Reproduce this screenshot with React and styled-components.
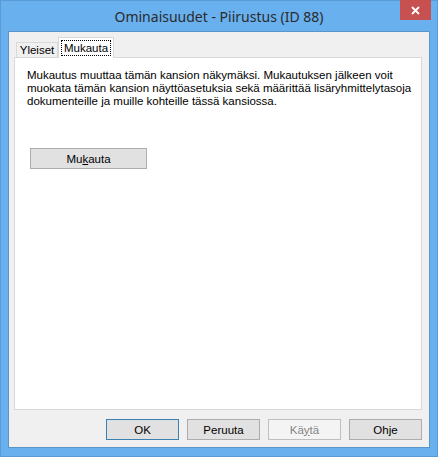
import styled, { createGlobalStyle } from "styled-components";

const Global = createGlobalStyle`
  html, body {
    margin: 0;
    padding: 0;
    background: #ffffff;
  }
  body {
    font-family: "Liberation Sans", Arial, sans-serif;
    font-size: 11.5px;
    color: #000;
  }
`;

const Window = styled.div`
  width: 438px;
  height: 457px;
  background: #68b0ee;
  display: flex;
  flex-direction: column;
  box-sizing: border-box;
  border: 1px solid #5b9bd5;
`;

const TitleBar = styled.div`
  height: 30px;
  position: relative;
  display: flex;
  align-items: center;
  justify-content: center;
`;

const Title = styled.div`
  font-family: "Noto Sans", sans-serif;
  font-size: 14px;
  color: #2b2b2b;
  padding-top: 1px;
`;

const CloseButton = styled.div`
  position: absolute;
  top: -1px;
  right: 6px;
  width: 31px;
  height: 20px;
  background: #c75050;
  color: #fff;
  display: flex;
  align-items: center;
  justify-content: center;
`;

const Client = styled.div`
  flex: 1;
  margin: 0 7px 8px 7px;
  background: #f0f0f0;
  border: 1px solid #5a94c8;
  display: flex;
  flex-direction: column;
  padding: 6px 7px 0 5px;
`;

const TabRow = styled.div`
  display: flex;
  align-items: flex-end;
  height: 20px;
  padding-left: 2px;
  position: relative;
  z-index: 1;
`;

const Tab = styled.div`
  box-sizing: border-box;
  width: ${(p) => p.$width}px;
  height: ${(p) => (p.$active ? "21px" : "16px")};
  padding-top: ${(p) => (p.$active ? "2px" : "0")};
  background: ${(p) => (p.$active ? "#ffffff" : "#f0f0f0")};
  border: 1px solid #d9d9d9;
  border-bottom: ${(p) => (p.$active ? "none" : "1px solid #d9d9d9")};
  display: flex;
  justify-content: center;
  align-items: ${(p) => (p.$active ? "flex-start" : "center")};
  line-height: 13px;
`;

const FocusLabel = styled.span`
  border: 1px dotted #000;
  padding: 0 2px;
  line-height: 14px;
`;

const Panel = styled.div`
  height: 353px;
  box-sizing: border-box;
  margin-top: -1px;
  background: #ffffff;
  border: 1px solid #d9d9d9;
  padding: 11px 10px 0 12px;
  display: flex;
  flex-direction: column;
  align-items: flex-start;
`;

const Description = styled.p`
  margin: 0;
  line-height: 13px;
  white-space: nowrap;
`;

const Button = styled.button`
  box-sizing: border-box;
  width: ${(p) => p.$width || 73}px;
  height: 21px;
  font-family: "Liberation Sans", Arial, sans-serif;
  font-size: 11.5px;
  line-height: 14px;
  padding: 0;
  background: ${(p) => (p.disabled ? "#f4f4f4" : "#e1e1e1")};
  color: ${(p) => (p.disabled ? "#838383" : "#000")};
  border: 1px solid
    ${(p) => (p.$default ? "#3c7fb1" : p.disabled ? "#bfbfbf" : "#adadad")};
`;

const CustomizeButton = styled(Button)`
  margin: 40px 0 0 3px;
`;

const Footer = styled.div`
  display: flex;
  justify-content: flex-end;
  gap: 8px;
  padding-top: 9px;
`;

const Key = styled.u`
  text-underline-offset: 1px;
`;

export default function App() {
  return (
    <>
      <Global />
      <Window>
        <TitleBar>
          <Title>Ominaisuudet - Piirustus (ID 88)</Title>
          <CloseButton>
            <svg width="9" height="9" viewBox="0 0 9 9">
              <path d="M1 1 L8 8 M8 1 L1 8" stroke="#fff" strokeWidth="1.8" />
            </svg>
          </CloseButton>
        </TitleBar>
        <Client>
          <TabRow>
            <Tab $width={42}>Yleiset</Tab>
            <Tab $active $width={56}>
              <FocusLabel>Mukauta</FocusLabel>
            </Tab>
          </TabRow>
          <Panel>
            <Description>
              Mukautus muuttaa tämän kansion näkymäksi. Mukautuksen jälkeen voit
              <br />
              muokata tämän kansion näyttöasetuksia sekä määrittää lisäryhmittelytasoja
              <br />
              dokumenteille ja muille kohteille tässä kansiossa.
            </Description>
            <CustomizeButton $width={117}>
              Mu<Key>k</Key>auta
            </CustomizeButton>
          </Panel>
          <Footer>
            <Button $default>OK</Button>
            <Button>Peruuta</Button>
            <Button disabled>
              Kä<Key>y</Key>tä
            </Button>
            <Button>Ohje</Button>
          </Footer>
        </Client>
      </Window>
    </>
  );
}
